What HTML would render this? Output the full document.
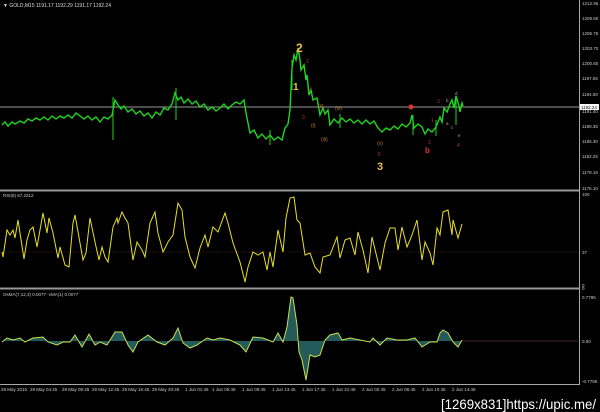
<!DOCTYPE html>
<html><head><meta charset="utf-8"><style>
html,body{margin:0;padding:0;background:#000;width:600px;height:412px;overflow:hidden}
svg{display:block}
text{font-family:"Liberation Sans",sans-serif}
</style></head><body>
<svg width="600" height="412" viewBox="0 0 600 412" xmlns="http://www.w3.org/2000/svg">
<rect width="600" height="412" fill="#000"/>
<text x="3" y="7" font-size="5" fill="#ddd">▼ GOLD,M15  1191.17 1192.29 1191.17 1192.24</text>
<rect x="0" y="189.5" width="579" height="2" fill="#999"/>
<rect x="0" y="287.5" width="579" height="2" fill="#999"/>
<line x1="0" y1="384.5" x2="580" y2="384.5" stroke="#aaa" stroke-width="1"/>
<line x1="579.5" y1="0" x2="579.5" y2="385" stroke="#aaa" stroke-width="1"/>
<line x1="0" y1="107" x2="579" y2="107" stroke="#999" stroke-width="1"/>
<polyline fill="none" stroke="#1fd61f" stroke-width="1.4" points="2,125 5,122 8,126 12,122 15,124 20,121 24,123 28,119 32,121 36,118 40,120 44,117 48,120 52,116 56,119 60,116 64,118 68,115 72,118 76,113 80,116 84,119 88,116 92,120 96,117 100,122 104,117 108,119 112,115 115,100 118,105 121,109 124,106 128,112 132,109 136,114 140,111 144,116 148,113 152,118 156,112 160,115 164,108 168,110 172,104 175,93 178,100 181,97 184,103 188,99 192,104 196,101 200,107 204,104 208,110 212,107 216,111 220,108 224,104 228,109 232,105 236,102 240,104 244,100 246,113 250,133 254,130 258,138 262,134 266,139 270,135 274,140 278,137 282,140 285,128 288,124 290,110 292,68 294,55 296,60 298,48 300,60 301,70 304,65 306,80 307,75 309,95 311,90 313,100 317,98 320,115 323,108 325,114 328,110 330,125 334,119 338,123 342,118 346,122 350,119 354,123 358,120 362,124 366,120 370,124 374,121 378,128 382,132 386,128 390,130 394,126 398,129 402,124 406,127 410,123 412,115 414,128 418,124 422,127 425,134 428,129 432,132 436,127 440,117 442,122 444,108 447,112 450,104 452,100 454,108 456,96 459,106 460,112 462,103 463,106"/>
<g stroke="#1fd61f" stroke-width="1">
<line x1="113" y1="97" x2="113" y2="140"/><line x1="176" y1="88" x2="176" y2="120"/>
<line x1="292" y1="60" x2="292" y2="90"/><line x1="270" y1="130" x2="270" y2="145"/>
<line x1="413" y1="115" x2="413" y2="135"/><line x1="456" y1="100" x2="456" y2="125"/>
<line x1="340" y1="114" x2="340" y2="128"/><line x1="436" y1="120" x2="436" y2="136"/>
</g>
<text x="296" y="52" font-size="12" fill="#e8c040" font-weight="bold">2</text>
<text x="293" y="90" font-size="10" fill="#e8c040" font-weight="bold">1</text>
<text x="377" y="170" font-size="11" fill="#e8c040" font-weight="bold">3</text>
<g font-size="5" fill="#c0302a">
<text x="306" y="63">2</text><text x="309" y="91">4</text><text x="302" y="119">3</text><text x="378" y="156">5</text>
<text x="428" y="144">2</text><text x="437" y="103">3</text><text x="457" y="147">4</text><text x="431" y="122">1</text></g>
<g font-size="5" fill="#c08020">
<text x="318" y="108">(ii)</text><text x="335" y="110">(iv)</text><text x="311" y="127">(i)</text><text x="321" y="141">(iii)</text><text x="377" y="145">(v)</text></g>
<circle cx="411" cy="107" r="2.5" fill="#e03030"/>
<text x="425" y="153" font-size="8" fill="#e03030" font-weight="bold">b</text>
<g font-size="4.5" fill="#aaa"><text x="446" y="102">b</text><text x="455" y="95">d</text><text x="446" y="125">a</text><text x="451" y="129">c</text><text x="458" y="137">e</text></g>
<g font-size="4.5" fill="#ccc">
<text x="582" y="5">1212.95</text><text x="582" y="20">1209.80</text><text x="582" y="35">1206.75</text><text x="582" y="50">1203.70</text><text x="582" y="65">1200.60</text><text x="582" y="80">1197.55</text><text x="582" y="96">1194.50</text><text x="582" y="113">1191.40</text><text x="582" y="128">1188.35</text><text x="582" y="143">1185.30</text><text x="582" y="158">1182.25</text><text x="582" y="174">1179.15</text><text x="582" y="190">1176.10</text>
<text x="582" y="196">100</text><text x="582" y="254">37</text><text x="582" y="287">0</text>
<text x="582" y="290">0</text><text x="582" y="299">0.7795</text><text x="582" y="343">0.00</text><text x="582" y="383">-0.7795</text></g>
<rect x="580" y="104" width="19" height="6" fill="#fff"/>
<text x="581" y="109" font-size="4.5" fill="#000">1192.24</text>
<text x="3" y="197" font-size="4.5" fill="#ccc">RSI(8) 67.2312</text>
<line x1="0" y1="252" x2="579" y2="252" stroke="#5a2a2a" stroke-width="0.6" stroke-dasharray="1,1"/>
<polyline fill="none" stroke="#e8e020" stroke-width="1" points="2,252 3,257 7,230 10,235 13,230 15,238 18,220 24,259 27,240 30,230 33,227 37,247 43,213 47,233 49,218 53,233 58,258 60,247 65,265 69,267 73,223 75,215 80,243 83,260 86,253 90,218 95,242 99,260 102,247 105,257 108,262 113,227 117,218 118,223 122,212 125,218 128,223 133,260 137,242 142,250 145,257 150,223 155,212 158,233 163,252 168,242 173,235 178,203 182,210 185,237 190,257 195,268 200,248 205,235 208,247 213,227 218,232 225,213 228,223 233,243 240,262 245,282 248,267 253,252 258,255 263,252 267,270 270,252 273,267 278,230 283,252 286,218 290,198 294,197 297,220 300,223 305,255 310,253 315,267 320,273 323,257 330,255 337,237 340,258 345,240 350,238 355,255 358,232 363,250 368,273 372,237 380,270 385,243 390,228 395,228 398,250 402,227 407,247 412,235 417,220 422,260 425,242 430,253 433,265 437,228 440,235 443,212 448,210 452,235 453,220 458,238 462,224"/>
<text x="3" y="296" font-size="4.5" fill="#ccc">OsMA(7,12,3) 0.0077   -vMA(1) 0.0077</text>
<line x1="462" y1="341" x2="579" y2="341" stroke="#5a2a3a" stroke-width="0.7"/>
<polygon fill="#2a6a6a" opacity="0.85" points="2,341 2,342 7,338 13,340 20,338 25,342 33,338 43,337 48,342 57,345 63,342 70,342 75,335 82,347 89,334 95,345 100,342 107,345 115,332 122,332 128,345 133,352 138,342 148,335 157,342 165,345 173,338 178,328 183,343 190,348 197,345 207,338 213,340 220,338 230,340 240,345 246,352 253,337 263,338 273,342 278,333 283,342 287,327 291,297 293,298 297,325 299,352 302,360 306,380 310,355 315,357 320,355 325,340 330,335 338,333 342,340 350,338 360,340 370,342 373,338 380,345 387,338 397,340 407,340 415,338 422,347 430,342 437,342 440,333 443,330 448,333 453,342 458,347 462,340 462,341"/>
<polyline fill="none" stroke="#c8e04a" stroke-width="1" points="2,342 7,338 13,340 20,338 25,342 33,338 43,337 48,342 57,345 63,342 70,342 75,335 82,347 89,334 95,345 100,342 107,345 115,332 122,332 128,345 133,352 138,342 148,335 157,342 165,345 173,338 178,328 183,343 190,348 197,345 207,338 213,340 220,338 230,340 240,345 246,352 253,337 263,338 273,342 278,333 283,342 287,327 291,297 293,298 297,325 299,352 302,360 306,380 310,355 315,357 320,355 325,340 330,335 338,333 342,340 350,338 360,340 370,342 373,338 380,345 387,338 397,340 407,340 415,338 422,347 430,342 437,342 440,333 443,330 448,333 453,342 458,347 462,340"/>
<g font-size="4.5" fill="#ccc">
<text x="1" y="391">28 May 2015</text><text x="30" y="391">29 May 04:45</text><text x="62" y="391">29 May 08:45</text><text x="92" y="391">29 May 12:45</text><text x="122" y="391">29 May 16:45</text><text x="152" y="391">29 May 20:45</text><text x="185" y="391">1 Jun 01:45</text><text x="212" y="391">1 Jun 05:45</text><text x="242" y="391">1 Jun 09:45</text><text x="272" y="391">1 Jun 13:45</text><text x="302" y="391">1 Jun 17:45</text><text x="332" y="391">1 Jun 21:45</text><text x="362" y="391">2 Jun 02:45</text><text x="392" y="391">2 Jun 06:45</text><text x="422" y="391">2 Jun 10:45</text><text x="452" y="391">2 Jun 14:45</text></g>
<text x="441" y="409" font-size="14" fill="#fff" textLength="155" lengthAdjust="spacingAndGlyphs">[1269x831]https://upic.me/</text>
</svg>
</body></html>
